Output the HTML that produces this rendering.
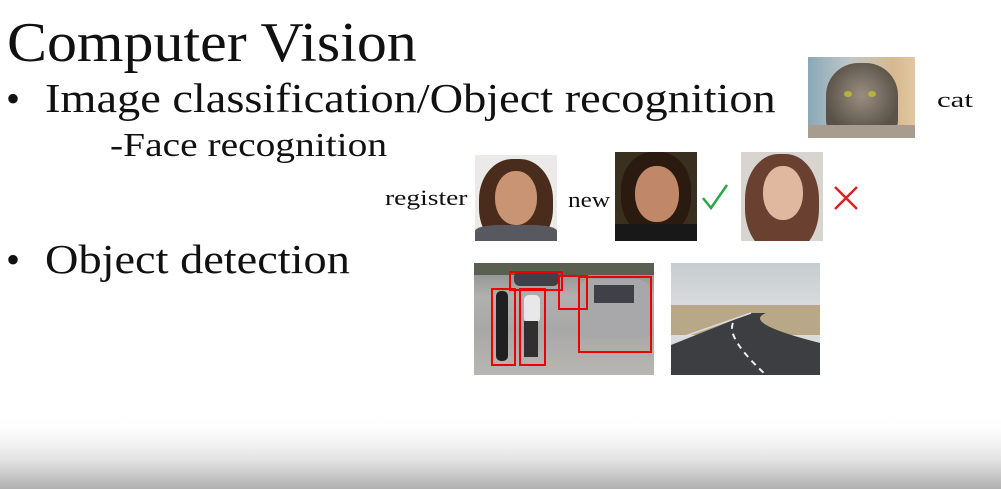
<!DOCTYPE html>
<html><head><style>
body{margin:0;width:1001px;height:489px;overflow:hidden;background:#fff;position:relative;font-family:"Liberation Serif",serif;color:#111}
.t{position:absolute;white-space:nowrap;line-height:1;transform-origin:0 0}
.img{position:absolute;overflow:hidden}
.box{position:absolute;border:2px solid #e00}
#fade{position:absolute;left:0;top:415px;width:1001px;height:74px;background:linear-gradient(#fff,#fdfdfd 20%,#e4e4e4 60%,#b0b0b0)}
</style></head><body>
<div class="t" style="left:7px;top:15px;font-size:56px;transform:scaleX(1.07)">Computer Vision</div>
<div class="t" style="left:6px;top:79px;font-size:40px">•</div>
<div class="t" style="left:45px;top:78px;font-size:41px;transform:scaleX(1.13)">Image classification/Object recognition</div>
<div class="t" style="left:110px;top:129px;font-size:34px;transform:scaleX(1.16)">-Face recognition</div>
<div class="t" style="left:6px;top:240px;font-size:40px">•</div>
<div class="t" style="left:45px;top:239px;font-size:41px;transform:scaleX(1.13)">Object detection</div>
<div class="t" style="left:937px;top:89px;font-size:22px;transform:scaleX(1.4)">cat</div>
<div class="t" style="left:385px;top:187px;font-size:22px;transform:scaleX(1.25)">register</div>
<div class="t" style="left:568px;top:189px;font-size:22px;transform:scaleX(1.15)">new</div>

<!-- cat -->
<div class="img" style="left:808px;top:57px;width:107px;height:81px;background:linear-gradient(90deg,#8aa8b8,#c0c8c8 40%,#d8b890 80%,#e0c8a0)">
<div style="position:absolute;left:18px;top:6px;width:72px;height:72px;border-radius:45% 45% 20% 20%;background:radial-gradient(circle at 50% 45%,#9a8e80,#5a5248 70%)"></div>
<div style="position:absolute;left:36px;top:34px;width:8px;height:6px;border-radius:50%;background:#b8b040"></div>
<div style="position:absolute;left:60px;top:34px;width:8px;height:6px;border-radius:50%;background:#b8b040"></div>
<div style="position:absolute;left:0;top:68px;width:107px;height:13px;background:#a89c90"></div>
</div>
<!-- faces -->
<div class="img" style="left:475px;top:155px;width:82px;height:86px;background:#eceae8">
<div style="position:absolute;left:4px;top:4px;width:74px;height:90px;border-radius:45%;background:#4a2c1c"></div>
<div style="position:absolute;left:20px;top:16px;width:42px;height:54px;border-radius:48%;background:#c89474"></div>
<div style="position:absolute;left:0;top:70px;width:82px;height:20px;background:#585860;border-radius:30% 30% 0 0"></div>
</div>
<div class="img" style="left:615px;top:152px;width:82px;height:89px;background:#3a3020">
<div style="position:absolute;left:6px;top:0px;width:70px;height:84px;border-radius:45%;background:#2a1a10"></div>
<div style="position:absolute;left:20px;top:14px;width:44px;height:56px;border-radius:48%;background:#c08868"></div>
<div style="position:absolute;left:0;top:72px;width:82px;height:20px;background:#181818"></div>
</div>
<div class="img" style="left:741px;top:152px;width:82px;height:89px;background:#d8d4d0">
<div style="position:absolute;left:4px;top:2px;width:74px;height:100px;border-radius:45%;background:#6a4030"></div>
<div style="position:absolute;left:22px;top:14px;width:40px;height:54px;border-radius:48%;background:#e0b8a0"></div>
</div>
<svg style="position:absolute;left:700px;top:182px" width="30" height="30"><path d="M3 16 L11 26 L27 3" stroke="#2aa84a" stroke-width="2.5" fill="none"/></svg>
<svg style="position:absolute;left:832px;top:184px" width="28" height="28"><path d="M3 3 L25 25 M25 3 L3 25" stroke="#e02020" stroke-width="2.5"/></svg>

<!-- detection -->
<div class="img" style="left:474px;top:263px;width:180px;height:112px;background:linear-gradient(#8a8a88,#b0b0ae 30%,#a8a8a6 60%,#b8b6b2)">
<div style="position:absolute;left:0;top:0;width:180px;height:12px;background:#5a6050"></div>
<div style="position:absolute;left:106px;top:16px;width:70px;height:60px;border-radius:10px 14px 6px 6px;background:#a8a8aa"></div>
<div style="position:absolute;left:120px;top:22px;width:40px;height:18px;background:#404048"></div>
<div style="position:absolute;left:40px;top:8px;width:45px;height:15px;border-radius:6px;background:#404048"></div>
<div style="position:absolute;left:22px;top:28px;width:12px;height:70px;background:#202020;border-radius:5px"></div>
<div style="position:absolute;left:50px;top:32px;width:16px;height:28px;background:#e8e8e8;border-radius:5px"></div>
<div style="position:absolute;left:50px;top:58px;width:14px;height:36px;background:#303030"></div>
<div class="box" style="left:17px;top:25px;width:21px;height:74px"></div>
<div class="box" style="left:45px;top:25px;width:23px;height:74px"></div>
<div class="box" style="left:35px;top:8px;width:50px;height:16px"></div>
<div class="box" style="left:84px;top:12px;width:26px;height:31px"></div>
<div class="box" style="left:104px;top:13px;width:70px;height:73px"></div>
</div>
<!-- road -->
<div class="img" style="left:671px;top:263px;width:149px;height:112px;background:linear-gradient(#c6ccd0,#dadcdc 40%)">
<div style="position:absolute;left:0;top:42px;width:149px;height:30px;background:#b8a888"></div>
<svg style="position:absolute;left:0;top:0" width="149" height="112"><path d="M0 82 L80 50 L95 50 Q70 60 149 80 L149 112 L0 112 Z" fill="#3c3e42"/><path d="M62 60 Q55 75 95 112" stroke="#eee" stroke-width="2" fill="none" stroke-dasharray="6 5"/><path d="M0 78 L80 50" stroke="#ddd" stroke-width="1.5"/></svg>
</div>
<div id="fade"></div>
</body></html>
